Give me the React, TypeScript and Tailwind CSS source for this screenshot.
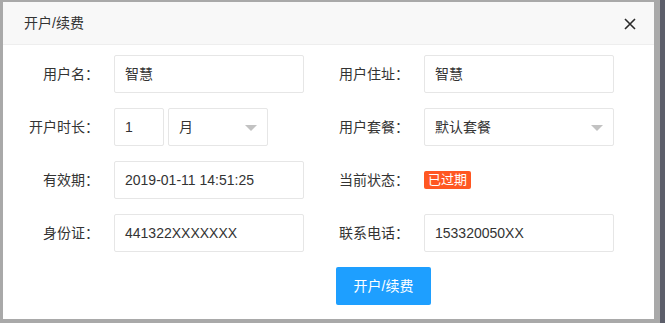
import React from 'react'

const font = { fontFamily: '"Liberation Sans", "Noto Sans CJK SC", sans-serif' }

function Label({ text }: { text: string }) {
  return (
    <label className="w-[110px] shrink-0 pr-[15px] text-right text-[14px] leading-[38px] text-[#333]">
      {text}
    </label>
  )
}

function Input({ value, className = 'w-[190px]' }: { value: string; className?: string }) {
  return (
    <div
      className={`${className} h-[38px] rounded-[2px] border border-[#e6e6e6] bg-white pl-[10px] text-[14px] leading-[36px] text-[#333]`}
    >
      {value}
    </div>
  )
}

function Select({ value, className }: { value: string; className: string }) {
  return (
    <div
      className={`${className} relative h-[38px] rounded-[2px] border border-[#e6e6e6] bg-white pl-[10px] text-[14px] leading-[36px] text-[#333]`}
    >
      {value}
      <span className="absolute right-[10px] top-[16px] h-0 w-0 border-x-[6px] border-t-[6px] border-x-transparent border-t-[#c2c2c2]" />
    </div>
  )
}

export default function App() {
  return (
    <div className="flex h-[323px] w-[665px] bg-[#a9a9a9]" style={font}>
      <div className="ml-[3px] mt-[2px] flex h-[317px] w-[651px] flex-col bg-white">
        <div className="flex h-[43px] shrink-0 items-center justify-between border-b border-[#eee] bg-[#f8f8f8] pl-[21px] pr-[18px]">
          <span className="text-[14px] text-[#333]">开户/续费</span>
          <svg width="12" height="12" viewBox="0 0 12 12" className="mt-[1px]">
            <path d="M1 1L11 11M11 1L1 11" stroke="#2a2a2a" strokeWidth="1.6" />
          </svg>
        </div>
        <div className="flex flex-col gap-[15px] pl-[1px] pt-[10px]">
          <div className="flex gap-[10px]">
            <div className="flex w-[300px]">
              <Label text="用户名：" />
              <Input value="智慧" />
            </div>
            <div className="flex w-[300px]">
              <Label text="用户住址：" />
              <Input value="智慧" />
            </div>
          </div>
          <div className="flex gap-[10px]">
            <div className="flex w-[300px]">
              <Label text="开户时长：" />
              <div className="flex gap-[4px]">
                <Input value="1" className="w-[50px]" />
                <Select value="月" className="w-[100px]" />
              </div>
            </div>
            <div className="flex w-[300px]">
              <Label text="用户套餐：" />
              <Select value="默认套餐" className="w-[190px]" />
            </div>
          </div>
          <div className="flex gap-[10px]">
            <div className="flex w-[300px]">
              <Label text="有效期：" />
              <Input value="2019-01-11 14:51:25" />
            </div>
            <div className="flex w-[300px] items-center">
              <Label text="当前状态：" />
              <span className="h-[18px] rounded-[2px] bg-[#ff5722] px-[4px] text-[13px] leading-[18px] text-white">
                已过期
              </span>
            </div>
          </div>
          <div className="flex gap-[10px]">
            <div className="flex w-[300px]">
              <Label text="身份证：" />
              <Input value="441322XXXXXXX" />
            </div>
            <div className="flex w-[300px]">
              <Label text="联系电话：" />
              <Input value="153320050XX" />
            </div>
          </div>
        </div>
        <div className="pl-[333px] pt-[15px]">
          <button className="h-[38px] w-[95px] rounded-[2px] bg-[#1e9fff] text-[14px] text-white">
            开户/续费
          </button>
        </div>
      </div>
      <div className="ml-[6px] h-full w-[5px] bg-[#5c5e6a]" />
    </div>
  )
}
